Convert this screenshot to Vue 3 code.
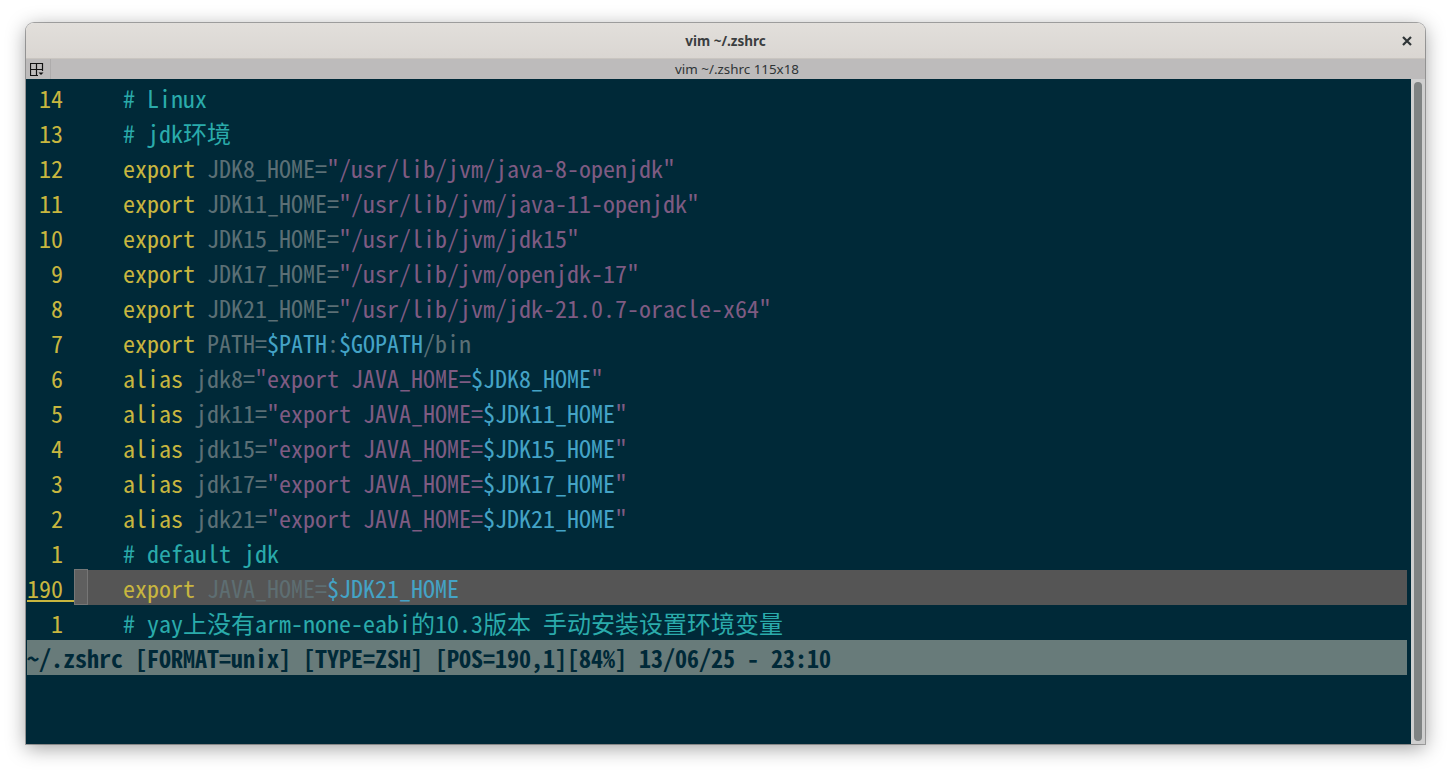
<script setup>
const Y = 'y', C = 'c', G = 'g', S = 's', B = 'b'
const exp = (name, val) => [['export', Y], [' ' + name + '=', G], ['"' + val + '"', S]]
const ali = (v, n) => [['alias', Y], [' ' + v + '=', G], ['"export JAVA_HOME=', S], ['$JDK' + n + '_HOME', B], ['"', S]]
const lines = [
  { n: '14', t: [['# Linux', C]] },
  { n: '13', t: [['# jdk环境', C]] },
  { n: '12', t: exp('JDK8_HOME', '/usr/lib/jvm/java-8-openjdk') },
  { n: '11', t: exp('JDK11_HOME', '/usr/lib/jvm/java-11-openjdk') },
  { n: '10', t: exp('JDK15_HOME', '/usr/lib/jvm/jdk15') },
  { n: '9', t: exp('JDK17_HOME', '/usr/lib/jvm/openjdk-17') },
  { n: '8', t: exp('JDK21_HOME', '/usr/lib/jvm/jdk-21.0.7-oracle-x64') },
  { n: '7', t: [['export', Y], [' PATH=', G], ['$PATH', B], [':', G], ['$GOPATH', B], ['/bin', G]] },
  { n: '6', t: ali('jdk8', '8') },
  { n: '5', t: ali('jdk11', '11') },
  { n: '4', t: ali('jdk15', '15') },
  { n: '3', t: ali('jdk17', '17') },
  { n: '2', t: ali('jdk21', '21') },
  { n: '1', t: [['# default jdk', C]] },
  { n: '190 ', cur: true, t: [['export', Y], [' JAVA_HOME=', G], ['$JDK21_HOME', B]] },
  { n: '1', t: [['# yay上没有arm-none-eabi的10.3版本 手动安装设置环境变量', C]] }
]
</script>

<template>
  <div class="page">
    <div class="window">
      <header class="titlebar">
        <span class="title">vim ~/.zshrc</span>
        <svg class="close" width="10" height="10" viewBox="0 0 10 10"><path d="M1 1 L9 9 M9 1 L1 9" stroke="#2e3436" stroke-width="2.2" fill="none"/></svg>
      </header>
      <div class="tabbar">
        <div class="tabmenu">
          <svg width="14" height="14" viewBox="0 0 14 14"><path d="M.5 .5H6.5V6.5H.5Z M6.5 .5H12.5V6.5H6.5Z M.5 6.5H6.5V12.5H.5Z M6.5 6.5V12.5H8 M12.5 6.5V8" stroke="#111" stroke-width="1.2" fill="none"/><path d="M8.5 9.5H13.5L11 12Z" fill="#111"/></svg>
        </div>
        <span class="tabtitle">vim ~/.zshrc 115x18</span>
      </div>
      <div class="body">
        <main class="term">
          <div v-for="(l, i) in lines" :key="i" class="row" :class="{ cur: l.cur }">
            <span class="num" :class="{ numcur: l.cur }">{{ l.n }}</span><span class="cell" :class="{ block: l.cur }"></span><span class="code"><span v-for="(p, j) in l.t" :key="j" :class="p[1]">{{ p[0] }}</span></span>
          </div>
          <div class="status">~/.zshrc [FORMAT=unix] [TYPE=ZSH] [POS=190,1][84%] 13/06/25 - 23:10</div>
        </main>
        <aside class="scroll"><div class="thumb"></div></aside>
      </div>
    </div>
  </div>
</template>

<style scoped>
.page { padding: 23px 26px 29px; width: 1399px; height: 721px; }
.window {
  width: 1399px; height: 721px; display: flex; flex-direction: column;
  border-radius: 8px 8px 0 0; overflow: hidden;
  box-shadow: 0 0 0 1px rgba(0,0,0,.3), 0 4px 20px rgba(0,0,0,.38);
}
.titlebar {
  height: 36px; flex: none; display: flex; align-items: center; justify-content: center; position: relative;
  background: linear-gradient(#e2dfdb, #dad6d2); border-bottom: 1px solid #c9c5c0; box-sizing: border-box;
}
.title { font: 700 13.5px "Noto Sans", sans-serif; color: #3a3e40; }
.close { position: absolute; right: 13px; top: 13px; }
.tabbar { height: 20px; flex: none; background: #bdbbbb; display: flex; align-items: center; }
.tabmenu { width: 25px; height: 20px; border-right: 1px solid #aeacac; display: flex; align-items: center; padding: 1px 0 0 4px; box-sizing: border-box; }
.tabtitle { flex: 1; text-align: center; padding-right: 2px; font: 13.4px "Noto Sans", sans-serif; color: #2e3436; }
.body { flex: 1; display: flex; min-height: 0; }
.term { flex: 1; background: #002938; padding: 1px 4px 0 1px; }
.scroll { width: 14px; background: #cfcfcf; padding: 3px; box-sizing: border-box; display: flex; }
.thumb { flex: 1; background: #7f8383; border-radius: 4px; }
.row {
  height: 35px; display: flex; font: 24px/35px "Noto Sans Mono CJK SC", "Noto Sans CJK SC", monospace; white-space: pre;
}
.row.cur { background: #555555; }
.num { width: 36px; text-align: right; color: #c8b63f; }
.row:not(.cur) .num { margin-right: 12px; }
.numcur {
  width: 48px; text-align: left; background: #002938;
  text-decoration: underline 2px; text-underline-offset: 2px; text-decoration-skip-ink: none;
}
.cell { width: 12px; flex: none; }
.block {
  width: 14px; height: 36px; margin: -1px -1px 0; background: #5f5f5f;
  box-sizing: border-box; border: 1px solid #767676;
}
.code { padding-left: 36px; }
.y { color: #c8b63f; }
.c { color: #2aabab; }
.g { color: #5b6f75; }
.s { color: #7e5b82; }
.b { color: #44a3c6; }
.cur .g { color: #5e6e72; }
.status {
  height: 35px; background: #687b7a; color: #002938; font: 700 24px/35px "Noto Sans Mono CJK SC", "Noto Sans CJK SC", monospace; white-space: pre;
}
</style>
<style>
body { background: #fff; }
</style>
